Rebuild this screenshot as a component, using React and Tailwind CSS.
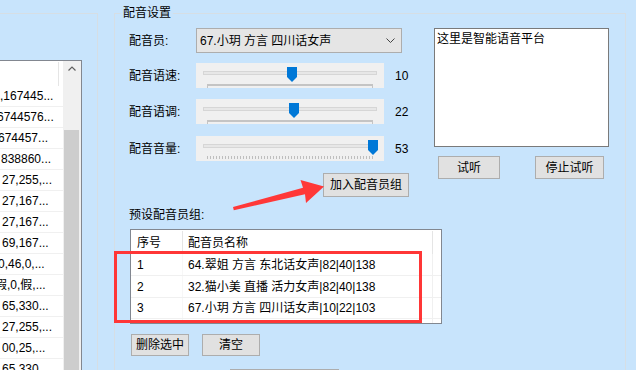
import React from "react";

const leftRows = [
  { t: ",167445...", c: "ml-0" },
  { t: "6744576...", c: "-ml-[3px]" },
  { t: "674457...", c: "-ml-[2px]" },
  { t: "838860...", c: "ml-[1px]" },
  { t: "27,255,...", c: "ml-[2px]" },
  { t: "27,167...", c: "ml-[2px]" },
  { t: "27,167...", c: "ml-[2px]" },
  { t: "69,167...", c: "ml-[2px]" },
  { t: "0,46,0,...", c: "-ml-[2px]" },
  { t: "假,0,假,...", c: "-ml-[5px]" },
  { t: "65,330...", c: "ml-[2px]" },
  { t: "27,255,...", c: "ml-[2px]" },
  { t: "00,25,...", c: "ml-[2px]" },
  { t: "65,330...", c: "ml-[2px]" },
];

function Thumb({ cls }) {
  return (
    <svg
      className={"absolute top-[4px] " + cls}
      width="10"
      height="15"
      viewBox="0 0 10 15"
    >
      <path d="M0 0H10V10L5 15L0 10Z" fill="#0078D7" />
    </svg>
  );
}

function Slider({ thumb, dotted }) {
  return (
    <div className="relative w-[188px] h-[25px] bg-[#F0F0F0] flex flex-col pt-[8px]">
      <div className="mx-[7px] h-[4px] border border-[#D6D6D6] bg-[#E7E7E7]" />
      {dotted ? (
        <div className="mx-[11px] mt-[8px] h-[3px] bg-[repeating-linear-gradient(90deg,#BEBEBE_0px,#BEBEBE_1px,transparent_1px,transparent_3px)]" />
      ) : (
        <div className="mx-[11px] mt-[9px] h-[4px] border-t-2 border-x border-[#C4C4C4]" />
      )}
      <Thumb cls={thumb} />
    </div>
  );
}

function SliderRow({ label, value, thumb, dotted, mt }) {
  return (
    <div className={"flex items-center h-[25px] " + mt}>
      <div className="w-[67px]">{label}</div>
      <Slider thumb={thumb} dotted={dotted} />
      <div className="ml-[11px]">{value}</div>
    </div>
  );
}

function Btn({ children, cls }) {
  return (
    <div
      className={
        "flex items-center justify-center bg-[#E1E1E1] border border-[#ADADAD] " +
        cls
      }
    >
      {children}
    </div>
  );
}

const groupRows = [
  { n: "1", t: "64.翠姐 方言 东北话女声|82|40|138", h: "h-[22px]" },
  { n: "2", t: "32.猫小美 直播 活力女声|82|40|138", h: "h-[22px]" },
  { n: "3", t: "67.小玥 方言 四川话女声|10|22|103", h: "h-[21px]" },
];

export default function App() {
  return (
    <div className="relative w-[636px] h-[370px] overflow-hidden bg-[#C8E4FC] flex items-start text-[12px] leading-4 text-black font-['Liberation_Sans','Noto_Sans_CJK_SC',sans-serif]">
      {/* left group */}
      <div className="w-[98px] shrink-0 mt-[13px] h-[400px] border-t border-r border-[#D6DEE4]">
        <div className="mt-[46px] w-[82px] h-[320px] bg-white border-t border-r border-[#828790] flex">
          <div className="w-[63px] flex flex-col overflow-hidden">
            <div className="h-[25px] shrink-0 flex">
              <div className="w-[59px] mt-[1px] border-r border-[#E5E5E5]" />
            </div>
            {leftRows.map((r, i) => (
              <div
                key={i}
                className="h-[21px] shrink-0 border-b border-[#F0F0F0] flex items-center whitespace-nowrap"
              >
                <span className={r.c}>{r.t}</span>
              </div>
            ))}
          </div>
          <div className="w-[18px] bg-[#F0F0F0] flex flex-col">
            <div className="h-[17px] flex items-center justify-center">
              <svg width="8" height="5" viewBox="0 0 8 5">
                <path d="M0.5 4.5L4 1L7.5 4.5" fill="none" stroke="#606060" strokeWidth="1.2" />
              </svg>
            </div>
            <div className="mt-[55px] ml-[1px] w-[15px] h-[300px] bg-[#CDCDCD]" />
          </div>
        </div>
      </div>

      {/* main group */}
      <fieldset className="ml-[16px] mt-[5px] w-[512px] h-[420px] shrink-0 border border-[#D6DEE4]">
        <legend className="ml-[6px] px-[2px] leading-4">配音设置</legend>
        <div className="pl-[14px] flex flex-col">
          <div className="mt-[7px] flex items-start">
            <div className="w-[280px] flex flex-col">
              <div className="flex items-center h-[25px]">
                <div className="w-[67px]">配音员:</div>
                <div className="w-[206px] h-[25px] bg-[#E5E5E5] border border-[#ADADAD] flex items-center pl-[3px] pr-[6px]">
                  <span className="flex-1">67.小玥 方言 四川话女声</span>
                  <svg width="9" height="5" viewBox="0 0 9 5">
                    <path d="M0.5 0.5L4.5 4.5L8.5 0.5" fill="none" stroke="#444" strokeWidth="1" />
                  </svg>
                </div>
              </div>
              <SliderRow label="配音语速:" value="10" thumb="left-[91px]" mt="mt-[10px]" />
              <SliderRow label="配音语调:" value="22" thumb="left-[93px]" mt="mt-[11px]" />
              <SliderRow label="配音音量:" value="53" thumb="left-[172px]" dotted mt="mt-[12px]" />
              <div className="mt-[12px] flex justify-end">
                <Btn cls="w-[86px] h-[24px]">加入配音员组</Btn>
              </div>
            </div>
            <div className="ml-[25px] w-[175px] flex flex-col">
              <div className="h-[119px] bg-white border border-[#7A7A7A] pl-[2px] pt-[2px]">
                这里是智能语音平台
              </div>
              <div className="mt-[9px] flex">
                <Btn cls="ml-[4px] w-[62px] h-[23px]">试听</Btn>
                <Btn cls="ml-[35px] w-[69px] h-[23px]">停止试听</Btn>
              </div>
            </div>
          </div>

          <div className="mt-[10px] h-[16px]">预设配音员组:</div>
          <div className="mt-[6px] ml-[1px] w-[312px] h-[95px] bg-white border border-[#828790] flex flex-col overflow-hidden">
            <div className="h-[24px] shrink-0 flex">
              <div className="w-[52px] mt-[1px] border-r border-[#E5E5E5] pl-[6px] flex items-center">
                序号
              </div>
              <div className="w-[250px] mt-[1px] border-r border-[#E5E5E5] pl-[5px] flex items-center">
                配音员名称
              </div>
            </div>
            {groupRows.map((r) => (
              <div key={r.n} className={"shrink-0 flex border-b border-[#F0F0F0] " + r.h}>
                <div className="w-[52px] border-r border-[#F7F7F7] pl-[6px] flex items-center">
                  {r.n}
                </div>
                <div className="w-[250px] border-r border-[#F0F0F0] pl-[5px] flex items-center whitespace-nowrap">
                  {r.t}
                </div>
              </div>
            ))}
            <div className="flex-1 flex">
              <div className="w-[52px] border-r border-[#F7F7F7]" />
              <div className="w-[250px] border-r border-[#F0F0F0]" />
            </div>
          </div>

          <div className="mt-[10px] flex">
            <Btn cls="ml-[2px] w-[58px] h-[22px]">删除选中</Btn>
            <Btn cls="ml-[13px] w-[58px] h-[22px]">清空</Btn>
          </div>
          <Btn cls="mt-[13px] ml-[101px] w-[109px] h-[24px]">{""}</Btn>
        </div>
      </fieldset>

      {/* annotations */}
      <div className="absolute left-[114px] top-[251px] w-[308px] h-[72px] border-[3px] border-[#FF3636] pointer-events-none" />
      <svg
        className="absolute left-0 top-0 pointer-events-none"
        width="636"
        height="370"
        viewBox="0 0 636 370"
      >
        <polygon
          points="233,207 303,187.8 300.5,180 324,186.5 306,203 305,194.2 233.8,210.2"
          fill="#FF3838"
        />
      </svg>
    </div>
  );
}
